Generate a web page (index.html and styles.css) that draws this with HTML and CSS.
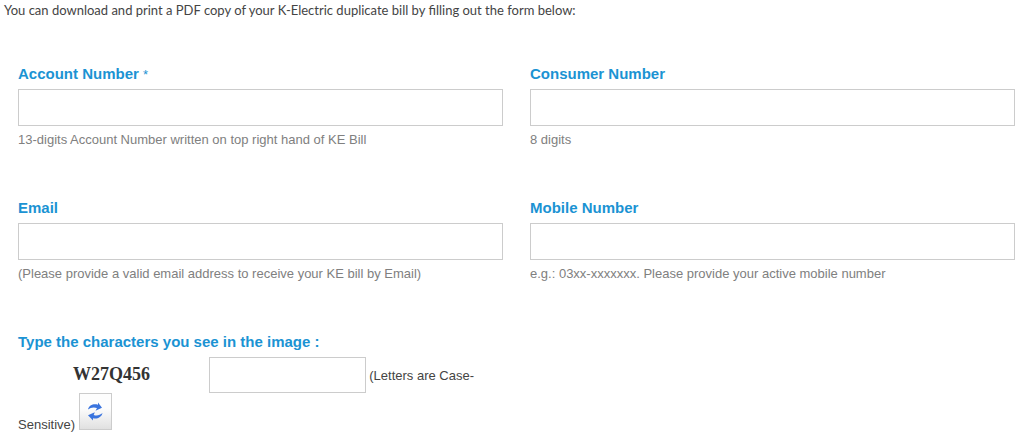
FILE: index.html
```html
<!DOCTYPE html>
<html lang="en">

<head>
    <meta charset="UTF-8">
    <meta name="viewport" content="width=device-width, initial-scale=1.0">
    <title>K-Electric Duplicate Bill</title>
    <link rel="stylesheet" href="styles.css">
</head>

<body>

    <p class="intro">You can download and print a PDF copy of your K-Electric duplicate bill by filling out the form below:</p>

    <form class="bill-form" id="billForm">
        <div class="form-group">
            <label for="accountNumber">Account Number <span class="required">*</span></label>
            <input type="text" id="accountNumber" name="accountNumber" maxlength="13" required>
            <span class="hint">13-digits Account Number written on top right hand of KE Bill</span>
        </div>
        <div class="form-group">
            <label for="consumerNumber">Consumer Number</label>
            <input type="text" id="consumerNumber" name="consumerNumber" maxlength="8">
            <span class="hint">8 digits</span>
        </div>
        <div class="form-group">
            <label for="email">Email</label>
            <input type="email" id="email" name="email">
            <span class="hint">(Please provide a valid email address to receive your KE bill by Email)</span>
        </div>
        <div class="form-group">
            <label for="mobileNumber">Mobile Number</label>
            <input type="tel" id="mobileNumber" name="mobileNumber">
            <span class="hint">e.g.: 03xx-xxxxxxx. Please provide your active mobile number</span>
        </div>

        <!-- Captcha -->
        <div class="form-group">
            <label for="captcha">Type the characters you see in the image :</label>
            <div class="captcha">
                <span class="captcha-code">W27Q456</span>
                <input type="text" id="captcha" name="captcha" autocomplete="off">
                (Letters are Case-Sensitive)
                <button type="button" class="refresh" aria-label="Refresh">
                    <svg viewBox="0 0 31 35" width="31" height="35">
                        <path d="M8 15.500C9 11 13.500 9.500 18 10.700L18 8.500L22 13.700L15.500 16.800L17 13.900C13.500 12.800 10.500 13.500 8 15.500Z" fill="#3a74de" />
                        <path d="M22.500 19C21.500 23.500 17 25.200 13 24.200L13 26.500L8 21.200L14.800 18.200L13.700 21C17 22.200 20 21.200 22.500 19Z" fill="#3a74de" />
                    </svg>
                </button>
            </div>
        </div>
    </form>

</body>

</html>
```

FILE: styles.css
```css
body {
    font-family: "Liberation Sans", Arial, sans-serif;
    font-size: 13px;
    line-height: 18px;
    background-color: #fff;
    color: #444;
    margin: 0;
}

.intro {
    font-family: Lato, sans-serif;
    margin: 0;
    padding: 1px 4px;
}

.bill-form {
    display: grid;
    grid-template-columns: 1fr 1fr;
    gap: 49px 27px;
    padding: 44px 9px 0 18px;
}

.form-group label {
    display: block;
    font-size: 15px;
    line-height: 20px;
    font-weight: bold;
    margin-bottom: 5px;
    color: #1b93d3;
}

.required {
    font-size: 13px;
    line-height: 1;
    font-weight: normal;
}

.form-group input {
    display: block;
    box-sizing: border-box;
    width: 100%;
    height: 37px;
    padding: 8px;
    font-family: inherit;
    font-size: 13px;
    border: 1px solid #ccc;
    background-color: #fff;
}

.hint {
    display: block;
    margin-top: 5px;
    color: #808080;
}

.captcha-code {
    display: inline-block;
    width: 187px;
    font-family: "Liberation Serif", "Times New Roman", serif;
    font-size: 18px;
    font-weight: bold;
    text-align: center;
    color: #333;
}

.captcha .captcha-code + input {
    display: inline-block;
    width: 157px;
    height: 36px;
}

.refresh {
    padding: 0;
    border: 1px solid #ccc;
    background: linear-gradient(#fdfdfd 40%, #e0e0e0);
    cursor: pointer;
}

.refresh svg {
    display: block;
}
```
